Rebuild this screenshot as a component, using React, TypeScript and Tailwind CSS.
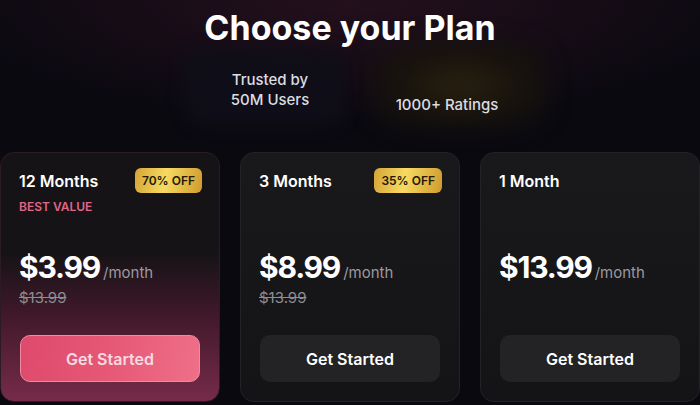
import React from 'react';

type Plan = {
  name: string;
  badge?: string;
  tag?: string;
  price: string;
  oldPrice?: string;
  featured?: boolean;
};

const plans: Plan[] = [
  { name: '12 Months', badge: '70% OFF', tag: 'BEST VALUE', price: '$3.99', oldPrice: '$13.99', featured: true },
  { name: '3 Months', badge: '35% OFF', price: '$8.99', oldPrice: '$13.99' },
  { name: '1 Month', price: '$13.99' },
];

const PlanCard: React.FC<{ plan: Plan }> = ({ plan }) => {
  return (
    <div
      className={
        plan.featured
          ? 'flex h-[250px] w-[220px] flex-col rounded-[14px] border border-[#2a1c22] bg-[linear-gradient(180deg,#151316_0%,#151316_40%,#3e1829_64%,#762b49_100%)] pb-[19px] pl-[18px] pr-[17px] pt-[15px]'
          : 'flex h-[250px] w-[220px] flex-col rounded-[14px] border border-[#232226] bg-[linear-gradient(180deg,#19181b_0%,#141316_100%)] pb-[19px] pl-[18px] pr-[17px] pt-[15px]'
      }
    >
      <div className="flex h-[25px] shrink-0 items-center justify-between">
        <span className="text-[16px] font-semibold text-white">{plan.name}</span>
        {plan.badge && (
          <span className="flex h-[25px] items-center rounded-[6px] bg-[linear-gradient(100deg,#d4a535_0%,#f7da62_45%,#cf9b2e_100%)] px-[7px] text-[12px] font-semibold text-[#241804]">
            {plan.badge}
          </span>
        )}
      </div>
      <div className="mt-[7px] h-[14px] shrink-0 text-[12px] font-semibold leading-[14px] text-[#e0668a]">
        {plan.tag}
      </div>
      <div className="mt-[33px] flex h-[40px] shrink-0 items-baseline leading-[40px]">
        <span className="text-[30px] font-bold tracking-[-1.2px] text-white">{plan.price}</span>
        <span className="ml-[3px] text-[15px] text-[#9a9a9e]">/month</span>
      </div>
      <div className="mt-px h-[20px] shrink-0 text-[15px] leading-[20px] text-[#8e8d91] line-through">
        {plan.oldPrice}
      </div>
      <button
        className={
          plan.featured
            ? 'ml-px mt-[27px] h-[47px] w-[180px] shrink-0 rounded-[10px] border border-[#f08aa0] bg-[linear-gradient(100deg,#de4a6c_0%,#e65876_50%,#ef7088_100%)] text-[16px] font-semibold text-[#f6dbe2]'
            : 'ml-px mt-[27px] h-[47px] w-[180px] shrink-0 rounded-[10px] bg-[#232225] text-[16px] font-semibold text-white'
        }
      >
        Get Started
      </button>
    </div>
  );
};

export default function App() {
  return (
    <div
      className="relative h-[405px] w-[700px] overflow-hidden bg-[#0a0910] text-white"
      style={{ fontFamily: 'Inter, "Noto Sans", sans-serif' }}
    >
      <div className="pointer-events-none absolute inset-0 bg-[radial-gradient(ellipse_60%_30%_at_50%_0%,#24101d_0%,transparent_100%)]" />
      <div className="pointer-events-none absolute left-[370px] top-[40px] h-[90px] w-[180px] rounded-[30px] bg-[radial-gradient(ellipse_at_center,#2a2010_0%,#17130d_50%,transparent_100%)] blur-[10px]" />
      <div className="pointer-events-none absolute left-[185px] top-[50px] h-[75px] w-[160px] rounded-[20px] bg-[#0f0e18] blur-[8px]" />

      <div className="relative flex flex-col">
        <h1 className="mt-[8px] text-center text-[34px] font-bold leading-[40px]">
          Choose your Plan
        </h1>
        <div className="mt-[22px] flex h-[80px] pl-[190px]">
          <div className="flex w-[160px] flex-col items-center text-[15px] font-medium leading-[20px] text-[#dcdce0]">
            <span>Trusted by</span>
            <span>50M Users</span>
          </div>
          <div className="ml-[17px] flex w-[160px] flex-col items-center pt-[25px] text-[15px] font-medium leading-[20px] text-[#dcdce0]">
            <span>1000+ Ratings</span>
          </div>
        </div>
        <div className="mt-[2px] flex gap-[20px]">
          {plans.map((p) => (
            <PlanCard key={p.name} plan={p} />
          ))}
        </div>
      </div>
    </div>
  );
}
